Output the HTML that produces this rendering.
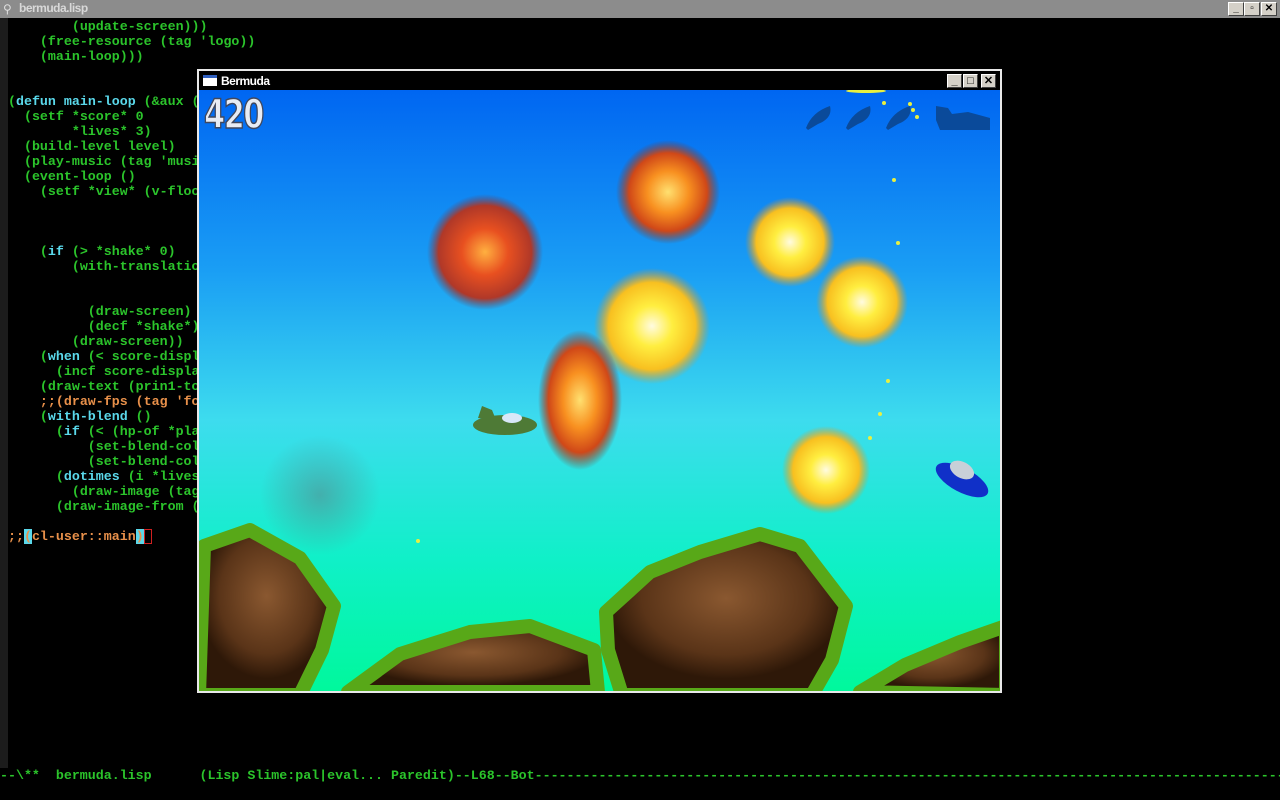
<!DOCTYPE html>
<html><head><meta charset="utf-8"><style>
*{margin:0;padding:0;box-sizing:border-box}
body{width:1280px;height:800px;background:#000;overflow:hidden;position:relative;font-family:"Liberation Mono",monospace}
#tb{position:absolute;left:0;top:0;width:1280px;height:18px;background:#8c8c8c}
#tb .t{position:absolute;left:19px;top:1px;font:bold 12px "Liberation Sans",sans-serif;color:#d8d8d8;letter-spacing:-0.5px}
.wb{position:absolute;top:2px;width:16px;height:14px;background:#d4d0c8;border:1px solid #fff;border-right-color:#404040;border-bottom-color:#404040;font:bold 10px "Liberation Sans",sans-serif;text-align:center;line-height:12px;color:#000}
#gut{position:absolute;left:0;top:18px;width:8px;height:750px;background:#1c1c1c}
pre{position:absolute;left:8px;top:19px;font-size:13.3px;line-height:15px;color:#2bc42b;font-family:"Liberation Mono",monospace;font-weight:bold}
.k{color:#5ad8ea}.c{color:#e8904a}
#ml{position:absolute;left:0;top:768px;font-size:13.3px;line-height:15px;color:#2bc42b;font-weight:bold;white-space:pre}
#gw{position:absolute;left:197px;top:69px;width:805px;height:624px;border:2px solid #e8e8e8;background:#000}
#gt{position:absolute;left:0;top:0;width:801px;height:19px;background:#000}
#gt .t{position:absolute;left:22px;top:3px;font:bold 12px "Liberation Sans",sans-serif;color:#fff;letter-spacing:-0.5px}
#gt .i{position:absolute;left:4px;top:4px;width:14px;height:11px;background:#fff;border-top:3px solid #3060c0}
.gb{position:absolute;top:3px;width:15px;height:14px;background:#d4d0c8;border:1px solid #fff;border-right-color:#404040;border-bottom-color:#404040;font:bold 11px "Liberation Sans",sans-serif;text-align:center;line-height:12px;color:#000}
#sc{position:absolute;left:0;top:19px}
</style></head><body>
<div id="tb"><span style="position:absolute;left:3px;top:2px;color:#ddd;font-size:12px">⚲</span><span class="t">bermuda.lisp</span>
<div class="wb" style="left:1228px">_</div><div class="wb" style="left:1244px">▫</div><div class="wb" style="left:1261px">✕</div></div>
<div id="gut"></div>
<pre>        (update-screen)))
    (free-resource (tag 'logo))
    (main-loop)))


(<span class="k">defun</span> <span class="k">main-loop</span> (&amp;aux (
  (setf *score* 0
        *lives* 3)
  (build-level level)
  (play-music (tag 'music
  (event-loop ()
    (setf *view* (v-floo



    (<span class="k">if</span> (&gt; *shake* 0)
        (with-translation


          (draw-screen)
          (decf *shake*))
        (draw-screen))
    (<span class="k">when</span> (&lt; score-displ
      (incf score-displa
    (draw-text (prin1-to
    <span class="c">;;(draw-fps (tag 'fo</span>
    (<span class="k">with-blend</span> ()
      (<span class="k">if</span> (&lt; (hp-of *pla
          (set-blend-col
          (set-blend-col
      (<span class="k">dotimes</span> (i *lives
        (draw-image (tag
      (draw-image-from (

<span class="c">;;<span style="background:#5ad8ea;color:#e8904a">(</span>cl-user::main<span style="background:#5ad8ea;color:#e8904a">)</span><span style="outline:1px solid #d02020;outline-offset:-1px"> </span></span></pre>
<div id="ml">--\**  bermuda.lisp      (Lisp Slime:pal|eval... Paredit)--L68--Bot----------------------------------------------------------------------------------------------</div>
<div id="gw">
<div id="gt"><div class="i"></div><span class="t">Bermuda</span>
<div class="gb" style="left:748px">_</div><div class="gb" style="left:764px">□</div><div class="gb" style="left:782px">✕</div></div>
<svg id="sc" width="801" height="601" viewBox="199 90 801 601">
<defs>
<linearGradient id="sky" x1="0" y1="0" x2="0" y2="1">
<stop offset="0" stop-color="#0066f2"/><stop offset="0.3" stop-color="#1a9ef4"/><stop offset="0.55" stop-color="#3ddcee"/><stop offset="0.78" stop-color="#10f0c8"/><stop offset="1" stop-color="#00f89c"/></linearGradient>
<radialGradient id="ey"><stop offset="0" stop-color="#fffbe0"/><stop offset="0.35" stop-color="#ffee40"/><stop offset="0.75" stop-color="#f8c020"/><stop offset="1" stop-color="#e09020" stop-opacity="0"/></radialGradient>
<radialGradient id="eo"><stop offset="0" stop-color="#ffe070"/><stop offset="0.4" stop-color="#f89020"/><stop offset="0.75" stop-color="#d04818"/><stop offset="1" stop-color="#803020" stop-opacity="0"/></radialGradient>
<radialGradient id="er"><stop offset="0" stop-color="#ffb040"/><stop offset="0.4" stop-color="#e85020"/><stop offset="0.8" stop-color="#b03828"/><stop offset="1" stop-color="#604060" stop-opacity="0"/></radialGradient>
<radialGradient id="sm"><stop offset="0" stop-color="#607880" stop-opacity="0.5"/><stop offset="1" stop-color="#607880" stop-opacity="0"/></radialGradient>
<radialGradient id="br" cx="0.5" cy="0.4"><stop offset="0" stop-color="#8a5830"/><stop offset="0.7" stop-color="#5a3418"/><stop offset="1" stop-color="#2e1808"/></radialGradient>
</defs>
<rect x="199" y="90" width="801" height="601" fill="url(#sky)"/>
<g stroke="#58a818" stroke-width="14" stroke-linejoin="round" fill="url(#br)">
<path d="M204 546 L250 530 L300 558 L334 606 L322 650 L300 695 L199 695 Z"/>
<path d="M348 692 L400 654 L470 632 L530 626 L594 650 L598 692 Z"/>
<path d="M606 612 L650 572 L700 552 L760 534 L800 546 L846 606 L832 660 L812 695 L622 695 L608 650 Z"/>
<path d="M860 692 L905 665 L960 642 L1006 626 L1006 695 Z"/>
</g>
<circle cx="320" cy="495" r="60" fill="url(#sm)"/>
<circle cx="485" cy="252" r="58" fill="url(#er)"/>
<circle cx="668" cy="192" r="52" fill="url(#eo)"/>
<circle cx="790" cy="242" r="45" fill="url(#ey)"/>
<circle cx="862" cy="302" r="46" fill="url(#ey)"/>
<circle cx="652" cy="326" r="58" fill="url(#ey)"/>
<ellipse cx="580" cy="400" rx="42" ry="70" fill="url(#eo)"/>
<circle cx="826" cy="470" r="44" fill="url(#ey)"/>
<g fill="#e8f040"><circle cx="894" cy="180" r="2"/><circle cx="898" cy="243" r="2"/><circle cx="888" cy="381" r="2"/><circle cx="880" cy="414" r="2"/><circle cx="870" cy="438" r="2"/><circle cx="418" cy="541" r="2"/><circle cx="884" cy="103" r="2"/><circle cx="910" cy="104" r="2"/><circle cx="913" cy="110" r="2"/><circle cx="917" cy="117" r="2"/></g>
<ellipse cx="866" cy="91" rx="20" ry="2" fill="#e8f040"/>
<g fill="#0a4a9a">
<path d="M806 128 Q812 112 830 106 Q833 118 818 124 L808 130 Z"/><path d="M846 128 Q852 112 870 106 Q873 118 858 124 L848 130 Z"/><path d="M886 128 Q892 112 910 106 Q913 118 898 124 L888 130 Z"/>
<path d="M936 106 L948 108 L952 114 L968 112 L990 118 L990 130 L940 130 L936 120 Z"/>
</g>
<ellipse cx="505" cy="425" rx="32" ry="10" fill="#4e7a36"/>
<path d="M478 418 L482 406 L492 410 L496 420 Z" fill="#4e7a36"/>
<ellipse cx="512" cy="418" rx="10" ry="5" fill="#d8e8f8"/>
<ellipse cx="962" cy="480" rx="29" ry="12" transform="rotate(28 962 480)" fill="#1030c8"/>
<ellipse cx="962" cy="470" rx="13" ry="8" transform="rotate(28 962 470)" fill="#c8d0d8"/>
<text x="204" y="128" font-family="DejaVu Sans Condensed,DejaVu Sans,sans-serif" font-weight="bold" font-size="40" fill="#e8ecf4" stroke="#40485e" stroke-width="1.5" letter-spacing="-2" transform="translate(204 0) scale(0.85 1) translate(-204 0)">420</text>
</svg>
</div>
</body></html>
